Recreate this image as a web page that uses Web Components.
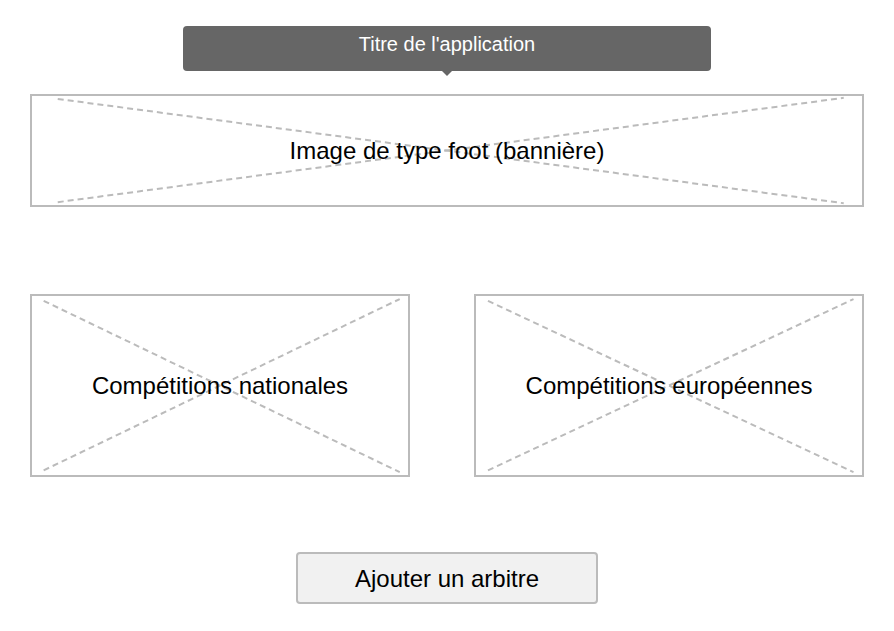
<!DOCTYPE html>
<html lang="fr">
<head>
<meta charset="utf-8">
<meta name="viewport" content="width=device-width, initial-scale=1">
<title>Titre de l'application</title>
<style>
  body { margin: 0; background: #fff; color: #000; font-family: "Liberation Sans", Arial, sans-serif; }
</style>
</head>
<body>
<app-page>
  <title-bubble slot="title">Titre de l'application</title-bubble>
  <image-placeholder slot="banner" style="--pad: 41px">Image de type foot (bannière)</image-placeholder>
  <image-placeholder slot="cards">Compétitions nationales</image-placeholder>
  <image-placeholder slot="cards">Compétitions européennes</image-placeholder>
  <action-button slot="action">Ajouter un arbitre</action-button>
</app-page>
<script>
const define = (name, html) => {
  const template = document.createElement('template');
  template.innerHTML = html;
  customElements.define(name, class extends HTMLElement {
    constructor() {
      super();
      this.attachShadow({ mode: 'open' }).append(template.content.cloneNode(true));
    }
  });
};

define('app-page', `
  <style>
    :host { display: block; }
    main { display: flex; flex-direction: column; padding: 26px 30px; }
    header { display: flex; justify-content: center; }
    .banner { margin-top: 23px; }
    .cards { display: grid; grid-template-columns: 38fr 39fr; gap: 64px; margin-top: 87px; }
    .action { display: flex; justify-content: center; margin-top: 75px; }
  </style>
  <main>
    <header><slot name="title"></slot></header>
    <div class="banner"><slot name="banner"></slot></div>
    <div class="cards"><slot name="cards"></slot></div>
    <div class="action"><slot name="action"></slot></div>
  </main>`);

define('title-bubble', `
  <style>
    :host { display: block; position: relative; box-sizing: border-box; width: 63.2%; padding: 7px 16px 15px;
      border-radius: 4px; background: #666; color: #fff; text-align: center; }
    :host::after { content: ""; position: absolute; top: 100%; left: 50%; margin-left: -5px;
      border: 5px solid transparent; border-top-color: #666; border-bottom: 0; }
    h1 { margin: 0; font-size: 20px; line-height: 23px; font-weight: 400; }
  </style>
  <h1><slot></slot></h1>`);

define('image-placeholder', `
  <style>
    :host { display: grid; border: 2px solid #bbb; background: #fff; }
    svg, p { grid-area: 1 / 1; }
    svg { width: 100%; height: 100%; min-height: 0; contain: size; }
    line { stroke: #bbb; stroke-width: 2; stroke-dasharray: 6 4; }
    p { position: relative; margin: 0; padding: var(--pad, 76px) 16px; font-size: 24px; line-height: 27px; text-align: center; }
  </style>
  <svg aria-hidden="true">
    <line x1="3.1%" y1="2.7%" x2="97.8%" y2="98.4%"/>
    <line x1="3.1%" y1="97.4%" x2="97.8%" y2="1.7%"/>
  </svg>
  <p><slot></slot></p>`);

define('action-button', `
  <style>
    :host { display: block; }
    button { box-sizing: border-box; min-width: 302px; padding: 11px 24px 10px; border: 2px solid #bbb; border-radius: 4px;
      background: #f1f1f1; color: inherit; font: 24px/27px "Liberation Sans", Arial, sans-serif; }
  </style>
  <button type="button"><slot></slot></button>`);
</script>
</body>
</html>
